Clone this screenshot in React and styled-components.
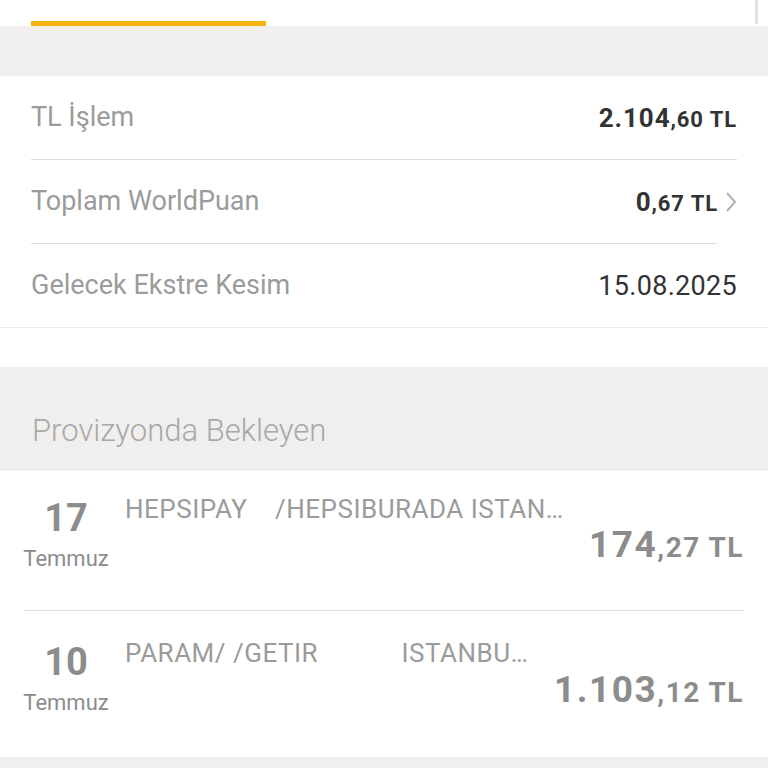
import React from 'react'
import styled, {createGlobalStyle} from 'styled-components'

const GlobalStyle = createGlobalStyle`
    body{
        margin:0;
        background:#ffffff;
        font-family: Roboto, "Noto Sans", Arial, sans-serif;
    }
`

const summary = [
    {label: 'TL İşlem', whole: '2.104', frac: ',60', unit: 'TL'},
    {label: 'Toplam WorldPuan', whole: '0', frac: ',67', unit: 'TL', link: true},
    {label: 'Gelecek Ekstre Kesim', plain: '15.08.2025'},
]

const pending = [
    {day: '17', month: 'Temmuz', merchant: 'HEPSIPAY    /HEPSIBURADA ISTANBUL TR', whole: '174', frac: ',27'},
    {day: '10', month: 'Temmuz', merchant: 'PARAM/ /GETIR            ISTANBUL TR', whole: '1.103', frac: ',12'},
]

function Chevron() {
    return (
        <svg width="14" height="24" viewBox="0 0 14 24">
            <polyline points="3,3 11,12 3,21" fill="none" stroke="#b0b0b0" strokeWidth="2" />
        </svg>
    )
}

function App() {
    return (
        <Page>
            <GlobalStyle />
            <TabBar>
                <Indicator />
                <ScrollThumb />
            </TabBar>
            <GreyBand />
            <InfoCard>
                {summary.map((row, i) => (
                    <InfoRow key={i} last={i === summary.length - 1} short={row.link}>
                        <Label>{row.label}</Label>
                        <Value>
                            {row.plain ? <Plain>{row.plain}</Plain> : (
                                <Money>{row.whole}<small>{row.frac} {row.unit}</small></Money>
                            )}
                            {row.link && <ChevronBox><Chevron /></ChevronBox>}
                        </Value>
                    </InfoRow>
                ))}
            </InfoCard>
            <Spacer />
            <SectionHeader>Provizyonda Bekleyen</SectionHeader>
            <List>
                {pending.map((t, i) => (
                    <TxRow key={i}>
                        <DateCol>
                            <Day>{t.day}</Day>
                            <Month>{t.month}</Month>
                        </DateCol>
                        <Merchant>{t.merchant}</Merchant>
                        <Amount>{t.whole}<small>{t.frac} TL</small></Amount>
                    </TxRow>
                ))}
            </List>
            <GreyBand />
        </Page>
    )
}

export default App

const Page = styled.div`
    width:768px;
    height:768px;
    overflow:hidden;
    background:#ffffff;
`
const TabBar = styled.div`
    position:relative;
    height:26px;
    padding-left:31px;
    display:flex;
    align-items:flex-end;
    background:#fff;
`
const Indicator = styled.div`
    width:235px;
    height:5px;
    background:#f6b20e;
`
const ScrollThumb = styled.div`
    position:absolute;
    right:10px;
    top:0;
    width:3px;
    height:24px;
    background:#e2e2e2;
`
const GreyBand = styled.div`
    height:50px;
    background:#f0efee;
`
const InfoCard = styled.div`
    background:#fff;
    border-bottom:1px solid #ececec;
    padding:0 31px;
`
const InfoRow = styled.div`
    height:83px;
    display:flex;
    align-items:center;
    justify-content:space-between;
    border-bottom:${props => props.last ? 'none' : '1.5px solid #dcdcdc'};
    margin-right:${props => props.short ? '20px' : '0'};
`
const Label = styled.div`
    font-size:27px;
    color:#9b9b9b;
    margin-top:-2px;
`
const Value = styled.div`
    display:flex;
    align-items:center;
`
const Money = styled.div`
    font-size:26px;
    font-weight:700;
    letter-spacing:0.9px;
    color:#333;
    small{
        font-size:22px;
    }
`
const Plain = styled.div`
    font-size:27px;
    letter-spacing:0.3px;
    color:#333;
`
const ChevronBox = styled.div`
    display:flex;
    margin-left:6px;
    margin-right:-21px;
`
const Spacer = styled.div`
    height:39px;
`
const SectionHeader = styled.div`
    height:103px;
    box-sizing:border-box;
    padding:45px 0 0 32px;
    background:#f0efee;
    border-bottom:1px solid #e4e4e4;
    font-size:31px;
    font-weight:300;
    color:#a8a8a8;
`
const List = styled.div`
    padding:0 24px;
    background:#fff;
`
const TxRow = styled.div`
    display:flex;
    align-items:center;
    height:140px;
    border-bottom:1.5px solid #dcdcdc;
    &:last-child{
        border-bottom:none;
        height:146px;
        padding-top:3px;
        box-sizing:border-box;
    }
`
const DateCol = styled.div`
    flex:none;
    align-self:flex-start;
    width:84px;
    padding-top:26px;
    display:flex;
    flex-direction:column;
    align-items:center;
`
const Day = styled.div`
    font-size:38px;
    font-weight:700;
    color:#8c8c8c;
    line-height:44px;
`
const Month = styled.div`
    font-size:22px;
    color:#8c8c8c;
    line-height:26px;
    margin-top:6px;
`
const Merchant = styled.div`
    flex:1;
    min-width:0;
    align-self:flex-start;
    margin-top:24px;
    margin-left:17px;
    margin-right:22px;
    font-size:26px;
    letter-spacing:0.5px;
    color:#9b9b9b;
    white-space:pre;
    overflow:hidden;
    text-overflow:ellipsis;
`
const Amount = styled.div`
    flex:none;
    margin-top:8px;
    font-size:37px;
    font-weight:700;
    letter-spacing:1.5px;
    color:#8c8c8c;
    white-space:nowrap;
    small{
        font-size:28px;
    }
`
